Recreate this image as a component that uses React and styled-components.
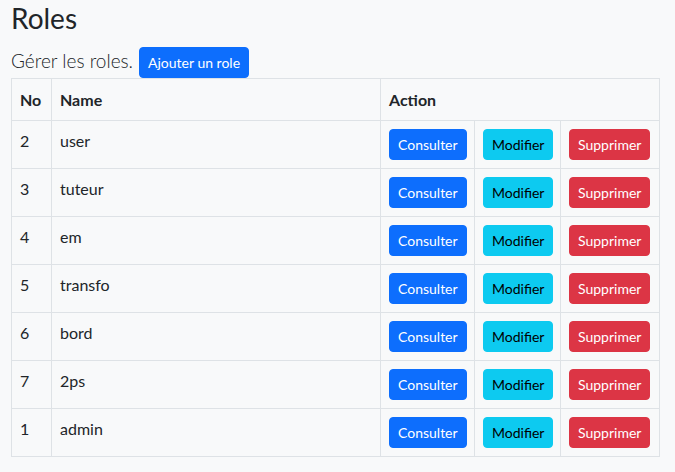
import React from "react";
import styled, { createGlobalStyle } from "styled-components";

const Global = createGlobalStyle`
  html, body { margin: 0; padding: 0; background: #f8f9fa; }
  body {
    font-family: "Lato", "Segoe UI", sans-serif;
    color: #212529;
    font-size: 16px;
    line-height: 1.5;
  }
  * { box-sizing: border-box; }
`;

const Page = styled.div`
  padding: 1px 16px 0 11px;
`;

const Title = styled.h2`
  margin: 0 0 11px;
  font-size: 28px;
  font-weight: 400;
  line-height: 34px;
`;

const Intro = styled.div`
  display: flex;
  align-items: baseline;
  gap: 6px;
`;

const Lead = styled.span`
  font-size: 19px;
  font-weight: 300;
  line-height: 30px;
`;

const Btn = styled.button`
  display: inline-block;
  font-family: inherit;
  font-size: 14px;
  line-height: 21px;
  padding: 4px 8px;
  border-radius: 4px;
  border: 1px solid ${(p) => p.$bg};
  background: ${(p) => p.$bg};
  color: ${(p) => p.$fg};
  cursor: pointer;
  white-space: nowrap;
`;

const Table = styled.table`
  width: 648px;
  border-collapse: collapse;
  table-layout: fixed;
`;

const Th = styled.th`
  text-align: left;
  font-weight: 700;
  padding: 8px;
  border: 1px solid #dee2e6;
  height: 42px;
`;

const Td = styled.td`
  padding: 8px;
  border: 1px solid #dee2e6;
  vertical-align: top;
  height: 48px;
`;

const roles = [
  [2, "user"],
  [3, "tuteur"],
  [4, "em"],
  [5, "transfo"],
  [6, "bord"],
  [7, "2ps"],
  [1, "admin"],
];

export default function App() {
  return (
    <Page>
      <Global />
      <Title>Roles</Title>
      <Intro>
        <Lead>Gérer les roles.</Lead>
        <Btn $bg="#0d6efd" $fg="#fff">Ajouter un role</Btn>
      </Intro>
      <Table>
        <colgroup>
          <col style={{ width: 40 }} />
          <col style={{ width: 329 }} />
          <col style={{ width: 94 }} />
          <col style={{ width: 86 }} />
          <col style={{ width: 99 }} />
        </colgroup>
        <thead>
          <tr>
            <Th>No</Th>
            <Th>Name</Th>
            <Th colSpan={3}>Action</Th>
          </tr>
        </thead>
        <tbody>
          {roles.map(([n, name]) => (
            <tr key={n}>
              <Td>{n}</Td>
              <Td>{name}</Td>
              <Td>
                <Btn $bg="#0d6efd" $fg="#fff">Consulter</Btn>
              </Td>
              <Td>
                <Btn $bg="#0dcaf0" $fg="#000">Modifier</Btn>
              </Td>
              <Td>
                <Btn $bg="#dc3545" $fg="#fff">Supprimer</Btn>
              </Td>
            </tr>
          ))}
        </tbody>
      </Table>
    </Page>
  );
}
